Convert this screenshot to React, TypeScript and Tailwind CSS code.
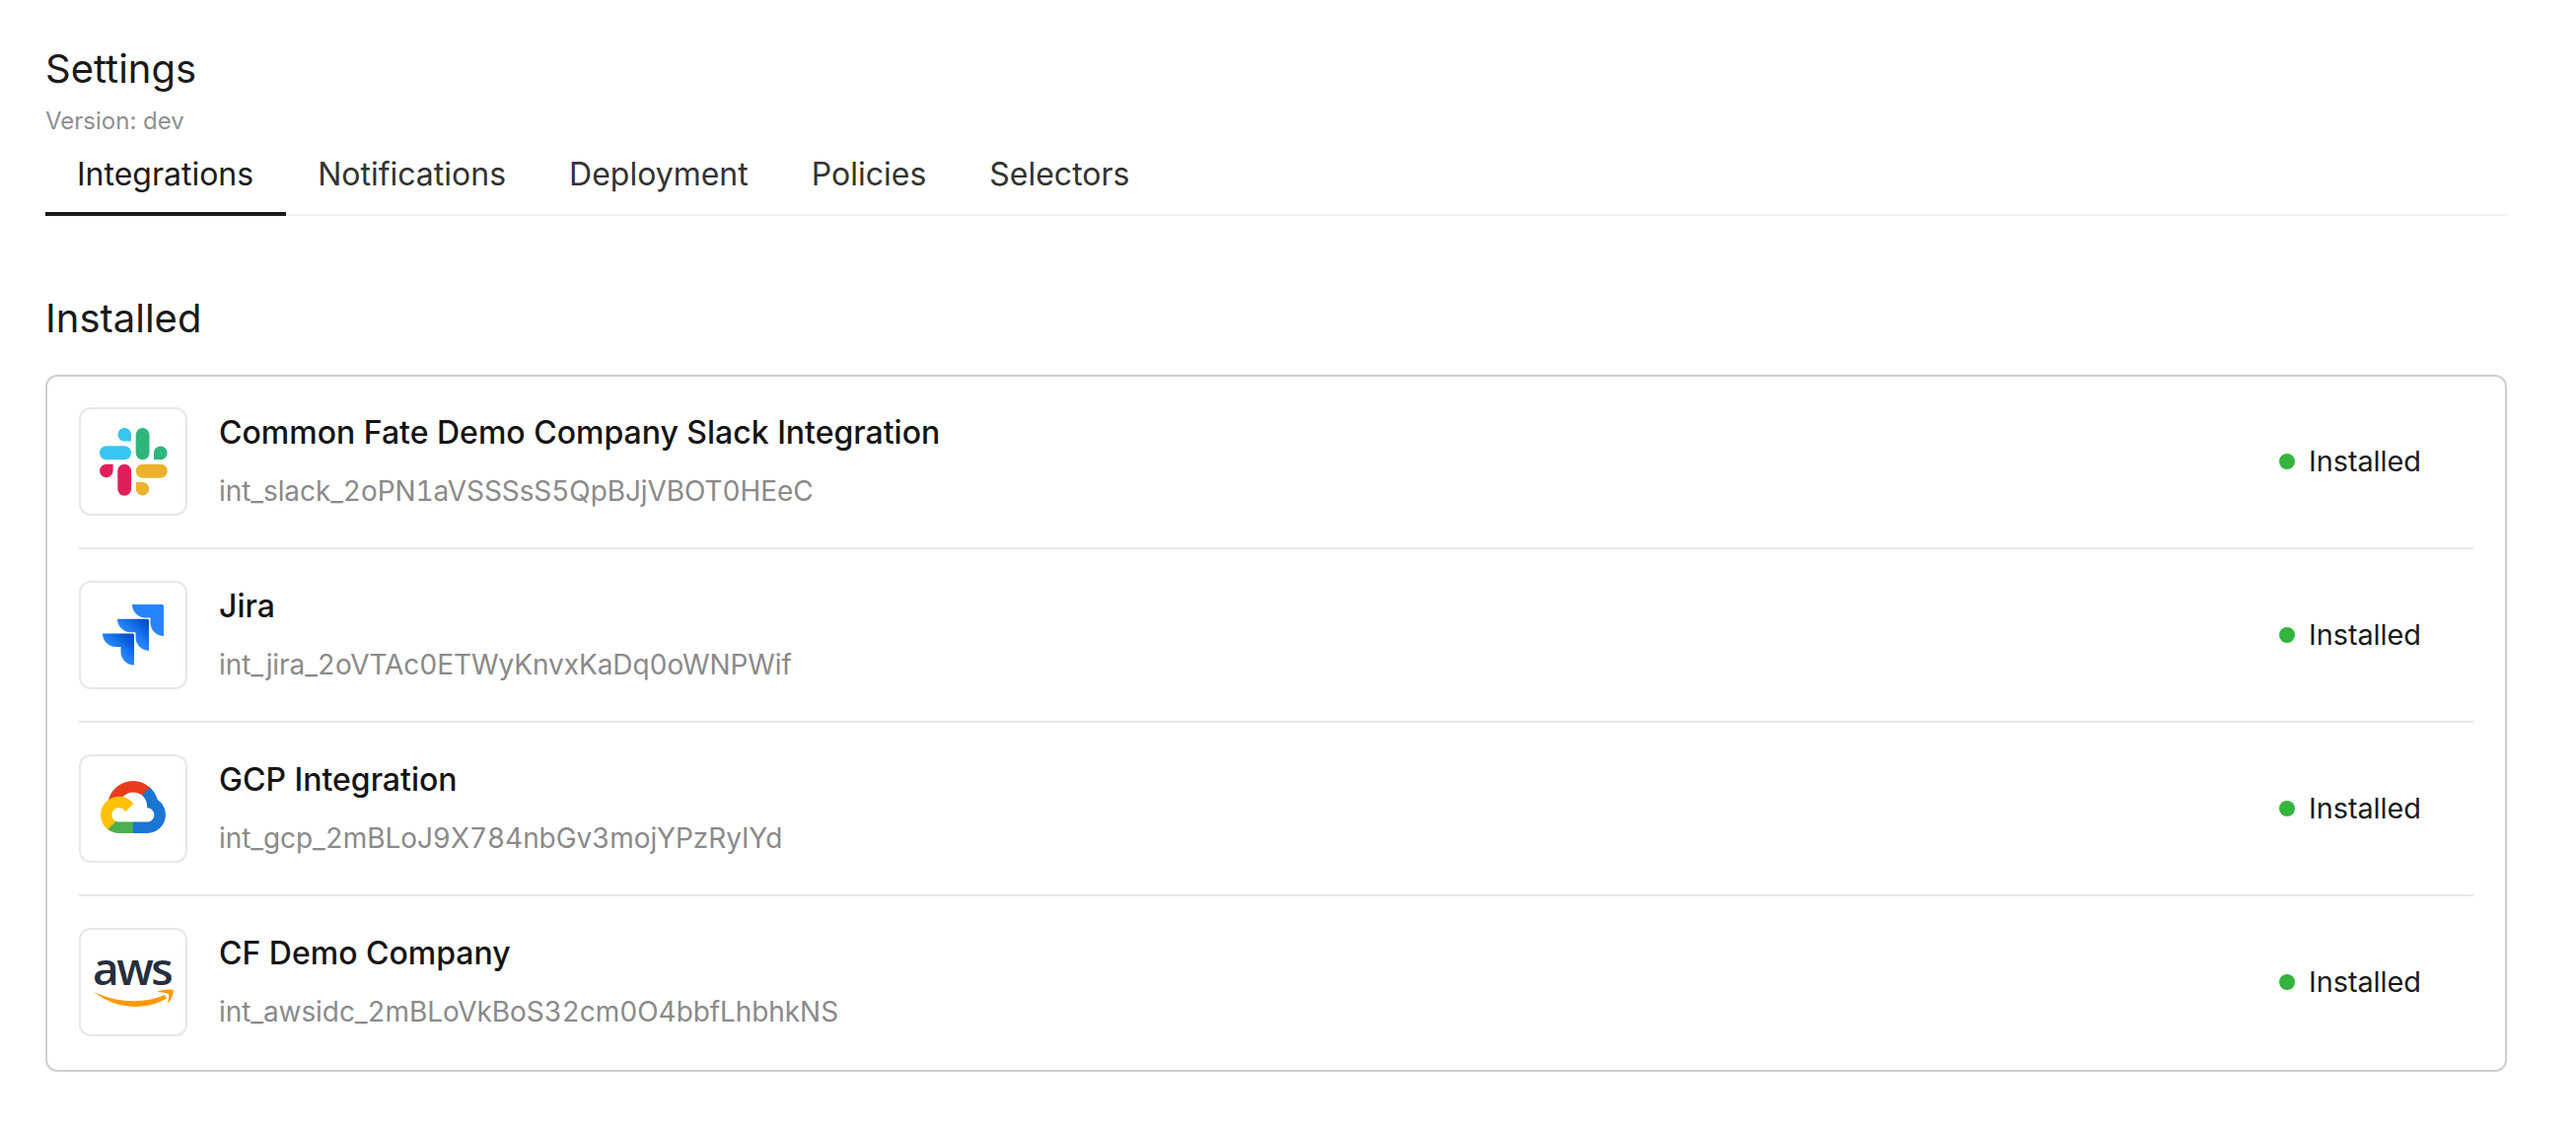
const rows = [
  { name: "Common Fate Demo Company Slack Integration", id: "int_slack_2oPN1aVSSSsS5QpBJjVBOT0HEeC", logo: "slack" },
  { name: "Jira", id: "int_jira_2oVTAc0ETWyKnvxKaDq0oWNPWif", logo: "jira" },
  { name: "GCP Integration", id: "int_gcp_2mBLoJ9X784nbGv3mojYPzRyIYd", logo: "gcp" },
  { name: "CF Demo Company", id: "int_awsidc_2mBLoVkBoS32cm0O4bbfLhbhkNS", logo: "aws" },
];

function Slack() {
  return (
    <svg width="69" height="69" viewBox="0 0 69 69">
      <path d="M32 13.500H25.200a6.800 6.800 0 1 1 6.800-6.800Z" fill="#36C5F0" />
      <rect x="0" y="18.300" width="32" height="14" rx="7" fill="#36C5F0" />
      <rect x="36.700" y="0" width="13.800" height="32.300" rx="6.900" fill="#2EB67D" />
      <path d="M55 32.200V25.400a6.800 6.800 0 1 1 6.800 6.800Z" fill="#2EB67D" />
      <path d="M13.600 36.700V43.500a6.800 6.800 0 1 1-6.800-6.800Z" fill="#E01E5A" />
      <rect x="18.300" y="36.700" width="13.800" height="32" rx="6.900" fill="#E01E5A" />
      <rect x="36.700" y="36.700" width="32" height="14" rx="7" fill="#ECB22E" />
      <path d="M36.700 55H43.500a6.800 6.800 0 1 1-6.800 6.800Z" fill="#ECB22E" />
    </svg>
  );
}

const jiraShape = "M0 0a13.500 13.500 0 0 0 13.500 13.500h5v5a13.500 13.500 0 0 0 13.500 13.500V1.500a1.500 1.500 0 0 0-1.500-1.500Z";

function Jira() {
  return (
    <svg width="62" height="62" viewBox="0 0 62 62">
      <defs>
        <linearGradient id="j1" x1="0.95" y1="0.05" x2="0.5" y2="0.55">
          <stop offset="0.15" stopColor="#0052CC" />
          <stop offset="1" stopColor="#2684FF" />
        </linearGradient>
      </defs>
      <path d={jiraShape} transform="translate(30 0)" fill="#2684FF" />
      <path d={jiraShape} transform="translate(15 14.700)" fill="url(#j1)" />
      <path d={jiraShape} transform="translate(0 29.500)" fill="url(#j1)" />
    </svg>
  );
}

function Gcp() {
  return (
    <svg width="66" height="53" viewBox="0 0 256 206" className="mb-[4px]">
      <path d="M170.2517,56.8186 L192.5047,34.5656 L193.9877,25.1956 C153.4367,-11.6774 88.9757,-7.4964 52.4207,33.9196 C42.2667,45.4226 34.7337,59.7636 30.7167,74.5726 L38.6867,73.4496 L83.1917,66.1106 L86.6277,62.5966 C106.4257,40.8546 139.8997,37.9296 162.7577,56.4286 L170.2517,56.8186 Z" fill="#EA3C1C" />
      <path d="M224.2048,73.9182 C219.0898,55.0822 208.5888,38.1492 193.9878,25.1962 L162.7568,56.4272 C175.9448,67.2032 183.4568,83.4402 183.1348,100.4662 L183.1348,106.0102 C198.4858,106.0102 210.9308,118.4542 210.9308,133.8052 C210.9308,149.1572 198.4858,161.2902 183.1348,161.2902 L127.4638,161.2902 L121.9978,167.2242 L121.9978,200.5642 L127.4638,205.7952 L183.1348,205.7952 C223.0648,206.1062 255.6868,174.3012 255.9978,134.3712 C256.1858,110.1682 244.2528,87.4782 224.2048,73.9182" fill="#1976D2" />
      <path d="M71.8704,205.7957 L127.4634,205.7957 L127.4634,161.2897 L71.8704,161.2897 C67.9094,161.2887 64.0734,160.4377 60.4714,158.7917 L52.5844,161.2117 L30.1754,183.4647 L28.2234,191.0387 C40.7904,200.5277 56.1234,205.8637 71.8704,205.7957" fill="#4CAF50" />
      <path d="M71.8704,61.4255 C31.9394,61.6635 -0.2366,94.2275 0.0014,134.1575 C0.1344,156.4555 10.5484,177.4455 28.2234,191.0385 L60.4714,158.7915 C46.4804,152.4705 40.2634,136.0055 46.5844,122.0155 C52.9044,108.0255 69.3704,101.8085 83.3594,108.1285 C89.5194,110.9125 94.4534,115.8465 97.2374,122.0155 L129.4844,89.7685 C115.7644,71.8315 94.4534,61.3445 71.8704,61.4255" fill="#FFC107" />
    </svg>
  );
}

function Aws() {
  return (
    <div className="flex flex-col items-center">
      <span className="font-['Open_Sans',sans-serif] text-[46px] leading-[40px] font-semibold tracking-[-2.5px] text-[#252f3e] -mt-[10px] -ml-[3px]">aws</span>
      <svg width="82" height="18" viewBox="0 0 82 18" className="mt-[2px] block">
        <path d="M0.500 2.500C20 13 50 16 73 6L75 9.500C52 23 22 20 0.500 2.500Z" fill="#FF9900" />
        <path d="M64.500 3C70 0.500 78 0 81.500 0.800C82.500 3 80 11 76 14.500C75.500 14 78 8 77 5.500C76 3.800 69 3.500 64.500 3Z" fill="#FF9900" />
      </svg>
    </div>
  );
}

const logos: Record<string, () => React.ReactElement> = { slack: Slack, jira: Jira, gcp: Gcp, aws: Aws };

export default function App() {
  return (
    <div className="min-h-[1146px] bg-white pl-[46px] pr-[70px] pt-[46px] text-[#1a1a1a] font-['Inter',sans-serif]">
      <h1 className="text-[40px] leading-[48px] font-normal">Settings</h1>
      <p className="mt-[14px] text-[24px] leading-[30px] text-[#8f8f8f]">Version: dev</p>
      <div className="flex border-b-2 border-[#f1f1f1] mt-[11px] h-[70px]">
        {["Integrations", "Notifications", "Deployment", "Policies", "Selectors"].map((t, i) => (
          <div key={t} className={i === 0 ? "pl-[32px] pr-[33px] pt-[6px] text-[32px] leading-[44px] border-b-4 border-[#1a1a1a] h-[70px] text-[#1a1a1a]" : "px-[32px] pt-[6px] text-[32px] leading-[44px] text-[#333333]"}>
            {t}
          </div>
        ))}
      </div>
      <h2 className="mt-[80px] text-[40px] leading-[48px] font-normal">Installed</h2>
      <div className="mt-[33px] border-2 border-[#cfcfcf] rounded-[12px] px-[32px] pt-[31px] pb-[34px]">
        {rows.map((r, i) => {
          const Logo = logos[r.logo];
          return (
            <div key={r.id} className={i < 3 ? "flex items-center h-[144px] pb-[32px] mb-[32px] border-b-2 border-[#e8e8e8]" : "flex items-center h-[110px]"}>
              <div className="w-[110px] h-[110px] border-2 border-[#e8e8e8] rounded-[12px] flex items-center justify-center shrink-0">
                <Logo />
              </div>
              <div className="ml-[32px] flex-1">
                <div className="text-[32px] leading-[40px] font-medium text-[#141414]">{r.name}</div>
                <div className="mt-[19px] text-[28px] leading-[40px] tabular-nums tracking-[-0.08px] text-[#8a8a8a]">{r.id}</div>
              </div>
              <div className="flex items-center mr-[53px]">
                <span className="w-[16px] h-[16px] rounded-full bg-[#34b33e]" />
                <span className="ml-[14px] text-[28.8px] leading-[36px] font-normal text-[#1a1a1a]">Installed</span>
              </div>
            </div>
          );
        })}
      </div>
    </div>
  );
}
